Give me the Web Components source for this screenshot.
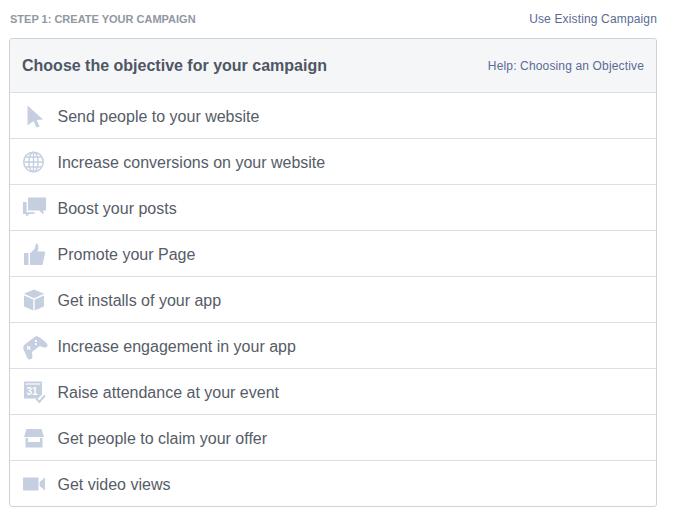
<!DOCTYPE html>
<html lang="en">
<head>
  <meta charset="UTF-8">
  <title>Create campaign</title>
  <style>
    body { margin: 0; background: #fff; font-family: "Liberation Sans", Arial, sans-serif; }
  </style>
</head>
<body>
  <campaign-step>
    <objective-row label="Send people to your website" icon="cursor"></objective-row>
    <objective-row label="Increase conversions on your website" icon="globe"></objective-row>
    <objective-row label="Boost your posts" icon="posts"></objective-row>
    <objective-row label="Promote your Page" icon="thumb"></objective-row>
    <objective-row label="Get installs of your app" icon="box"></objective-row>
    <objective-row label="Increase engagement in your app" icon="gamepad"></objective-row>
    <objective-row label="Raise attendance at your event" icon="event"></objective-row>
    <objective-row label="Get people to claim your offer" icon="store"></objective-row>
    <objective-row label="Get video views" icon="video"></objective-row>
  </campaign-step>
<script type="module">
  const icons = {
    cursor: `<path d="M4.5 1.5 L20 15.5 L13.6 15.9 L16.6 22.4 L13.4 23.6 L10.6 17 L4.5 21.5 Z"/>`,
    globe: `<g fill="none" stroke="#c5cfe0" stroke-width="1.4"><circle cx="10.5" cy="12" r="9.8"/><ellipse cx="10.5" cy="12" rx="4.6" ry="9.8"/><path d="M10.5 2V22M.8 12H20.2M2.2 7H18.8M2.2 17H18.8"/></g>`,
    posts: `<path d="M5 1.5H23V14.5H20.5V18.5L16.2 14.5H5Z"/><path d="M0 6H3.6V16.2H12.5L10.5 18H6L3.6 20.5L2.6 18H0Z"/>`,
    thumb: `<path d="M1 11H5.5V23H1Z"/><path d="M7 11.5 L11.5 7 L13 1.5 C15.2 1.5 15.8 3.8 15.2 6.5 L14.6 9.5 H21 C22 9.5 22.4 10.6 22 11.5 L19.8 22 C19.6 22.6 19.2 23 18.4 23 H7 Z"/>`,
    box: `<path d="M11 1.5 L21 5.8 L11 10.2 L1 5.8 Z"/><path d="M1 7.4 L10.3 11.4 V22.5 L1 18.4 Z"/><path d="M21 7.4 L11.7 11.4 V22.5 L21 18.4 Z"/>`,
    gamepad: `<g transform="translate(-.5 -.5) rotate(-38 11 12.5) translate(0 -1.5) scale(1 1.16)"><path fill-rule="evenodd" d="M4.6 6.5 H17.4 C19.6 6.5 20.6 8 21.2 10 L23 16 C23.6 18.4 22.4 19.8 20.8 19.8 C19.4 19.8 18.4 18.8 17.4 17.4 L16 15.4 H6 L4.6 17.4 C3.6 18.8 2.6 19.8 1.2 19.8 C-.4 19.8 -1.6 18.4 -1 16 L.8 10 C1.4 8 2.4 6.5 4.6 6.5 Z M5.6 8.6 V10.2 H4 V11.4 H5.6 V13 H6.8 V11.4 H8.4 V10.2 H6.8 V8.6 Z M16 9 A1 1 0 1 0 16 11 A1 1 0 1 0 16 9 Z M14 11 A1 1 0 1 0 14 13 A1 1 0 1 0 14 11 Z"/></g>`,
    event: `<path d="M1 1.5H19V14.5L15 18.5H1Z"/><rect x="2.6" y="3" width="14.8" height="2" fill="#fff" opacity=".55"/><text x="3.4" y="15" font-family="Liberation Sans, sans-serif" font-size="10" font-weight="700" fill="#fff">31</text><path d="M13 18.5 L16.4 21.8 L22 15.5" fill="none" stroke="#c5cfe0" stroke-width="2"/>`,
    store: `<path d="M3.5 3H18.5L21 11H1Z"/><path d="M2.5 12H19.5V21.5H2.5Z"/><rect x="5" y="12" width="12" height="4" fill="#fff"/>`,
    video: `<rect x="0" y="5.5" width="15.5" height="13" rx=".8"/><path d="M22 5.5V18.5L16.6 14V10Z"/>`
  };

  class ObjectiveRow extends HTMLElement {
    constructor() {
      super();
      this.attachShadow({mode: "open"});
      const label = this.getAttribute("label");
      const icon = icons[this.getAttribute("icon")];
      this.shadowRoot.innerHTML = `
        <style>
          :host {
            display: flex;
            align-items: center;
            height: 45px;
            border-top: 1px solid #dddfe2;
            padding-left: 13px;
            color: #565c68;
            font-size: 16px;
          }
          svg {
            width: 24px;
            height: 24px;
            fill: #c5cfe0;
            flex: none;
            margin-right: 10.5px;
            overflow: visible;
          }
          span {
            padding-top: 2px;
          }
        </style>
        <svg viewBox="0 0 24 24">${icon}</svg>
        <span>${label}</span>
      `;
    }
  }

  class CampaignStep extends HTMLElement {
    constructor() {
      super();
      this.attachShadow({mode: "open"});
      this.shadowRoot.innerHTML = `
        <style>
          :host {
            display: block;
            width: 648px;
            padding: 0 17px 10px 9px;
          }
          .top {
            display: flex;
            justify-content: space-between;
            align-items: center;
            height: 38px;
            padding-left: 1px;
          }
          .step {
            font-size: 11px;
            font-weight: 700;
            color: #9197a3;
          }
          a {
            color: #5b6b94;
            font-size: 12px;
            letter-spacing: .15px;
            text-decoration: none;
          }
          .panel {
            border: 1px solid #cfd2d8;
            border-radius: 3px;
            overflow: hidden;
          }
          .head {
            display: flex;
            justify-content: space-between;
            align-items: center;
            height: 53px;
            padding: 0 12px;
            background: #f5f6f8;
          }
          h2 {
            margin: 0;
            font-size: 16px;
            font-weight: 700;
            color: #4e5665;
          }
        </style>
        <div class="top">
          <span class="step">STEP 1: CREATE YOUR CAMPAIGN</span>
          <a href="#">Use Existing Campaign</a>
        </div>
        <div class="panel">
          <div class="head">
            <h2>Choose the objective for your campaign</h2>
            <a href="#">Help: Choosing an Objective</a>
          </div>
          <slot></slot>
        </div>
      `;
    }
  }

  customElements.define("objective-row", ObjectiveRow);
  customElements.define("campaign-step", CampaignStep);
</script>
</body>
</html>
